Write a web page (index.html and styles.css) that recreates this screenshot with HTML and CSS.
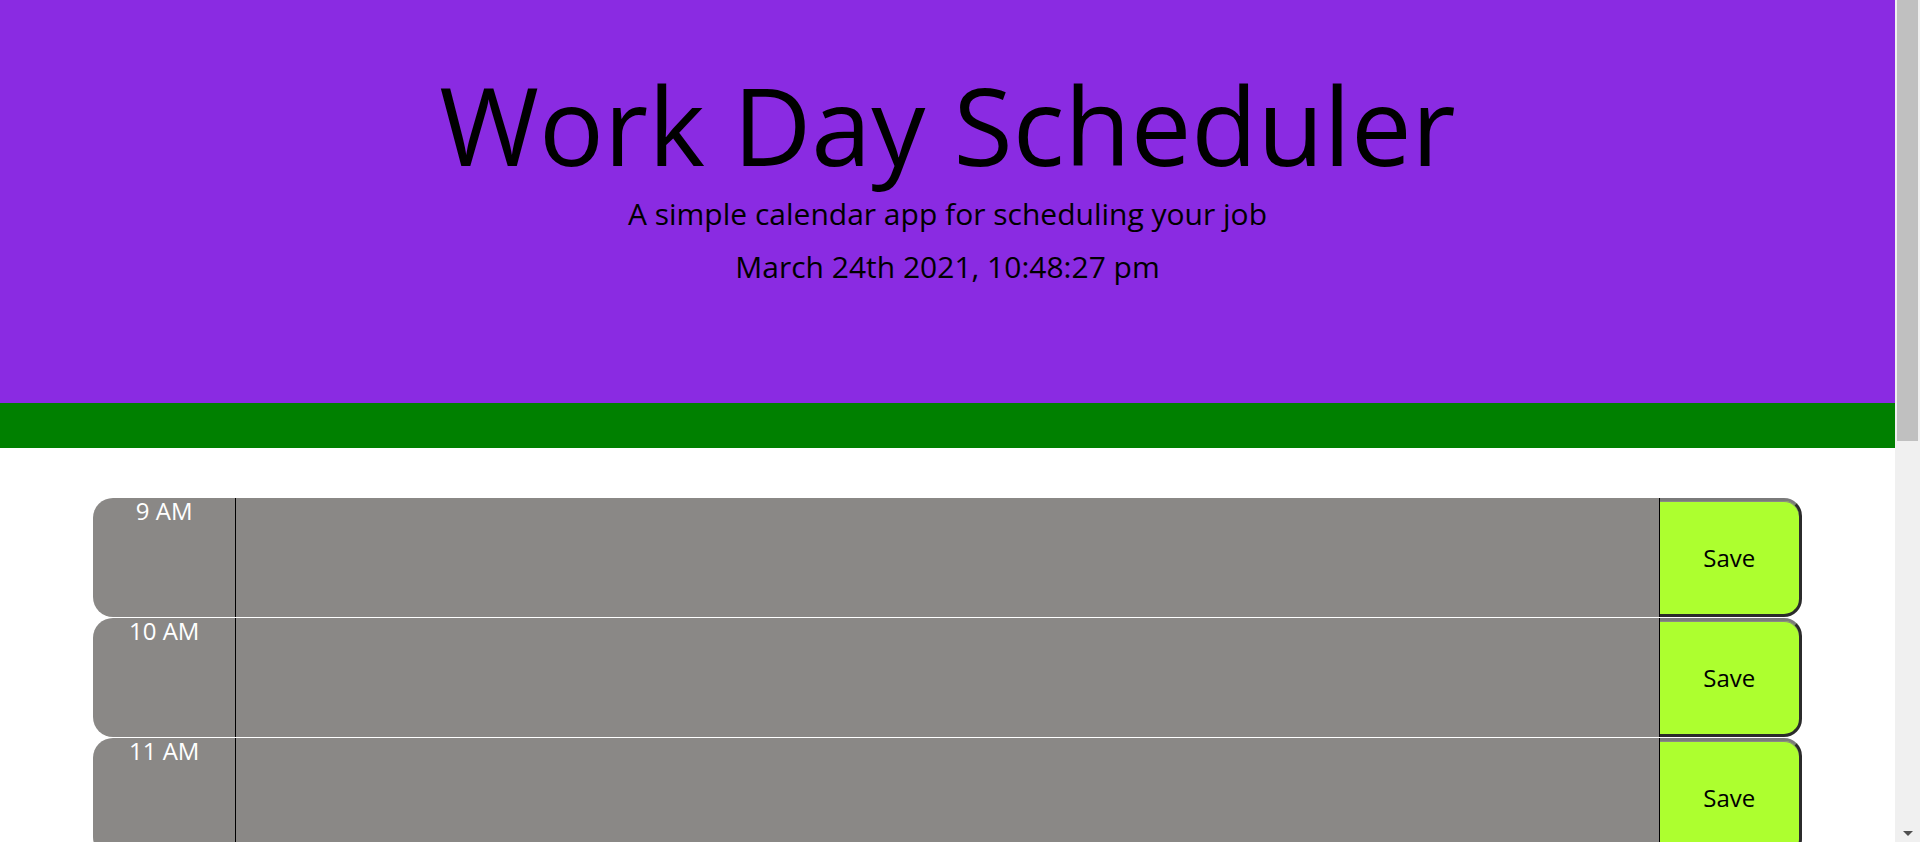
FILE: index.html
```html
<!DOCTYPE html>
<html lang="en">
<head>
<meta charset="utf-8">
<title>Work Day Scheduler</title>
<link rel="stylesheet" href="styles.css">
</head>
<body>
<div class="page">
  <header class="jumbotron">
    <h1 class="title">Work Day Scheduler</h1>
    <p class="lead">A simple calendar app for scheduling your job</p>
    <p class="current-day">March 24th 2021, 10:48:27 pm</p>
  </header>
  <div class="green-bar"></div>
  <main class="container">
    <div class="time-block"><div class="hour">9 AM</div><textarea class="description"></textarea><button class="save-btn">Save</button></div>
    <div class="time-block"><div class="hour">10 AM</div><textarea class="description"></textarea><button class="save-btn">Save</button></div>
    <div class="time-block"><div class="hour">11 AM</div><textarea class="description"></textarea><button class="save-btn">Save</button></div>
    <div class="time-block"><div class="hour">12 PM</div><textarea class="description"></textarea><button class="save-btn">Save</button></div>
    <div class="time-block"><div class="hour">1 PM</div><textarea class="description"></textarea><button class="save-btn">Save</button></div>
    <div class="time-block"><div class="hour">2 PM</div><textarea class="description"></textarea><button class="save-btn">Save</button></div>
    <div class="time-block"><div class="hour">3 PM</div><textarea class="description"></textarea><button class="save-btn">Save</button></div>
    <div class="time-block"><div class="hour">4 PM</div><textarea class="description"></textarea><button class="save-btn">Save</button></div>
    <div class="time-block"><div class="hour">5 PM</div><textarea class="description"></textarea><button class="save-btn">Save</button></div>
  </main>
</div>
<div class="scrollbar" aria-hidden="true">
  <div class="scroll-thumb"></div>
  <div class="scroll-track"></div>
  <div class="scroll-arrow"></div>
</div>
</body>
</html>
```
FILE: styles.css
```css
html, body {
  margin: 0;
  padding: 0;
  height: 100%;
  overflow: hidden;
}
body {
  display: flex;
  font-family: "Open Sans", "Liberation Sans", sans-serif;
  color: #000;
  background: #fff;
}
.page {
  flex: 1;
  min-width: 0;
  height: 100%;
  overflow: hidden;
}
.scrollbar {
  width: 25px;
  flex: none;
  background: #f0f0f0;
  display: flex;
  flex-direction: column;
  align-items: center;
  padding: 0 2px 6px;
  box-sizing: border-box;
}
.scroll-thumb {
  width: 100%;
  height: 441px;
  background: #c0c0c0;
}
.scroll-track {
  flex: 1;
}
.scroll-arrow {
  width: 0;
  height: 0;
  border-left: 5px solid transparent;
  border-right: 5px solid transparent;
  border-top: 5px solid #505050;
}
.jumbotron {
  background-color: #8a2be2;
  height: 403px;
  box-sizing: border-box;
  padding-top: 51px;
  text-align: center;
}
.title {
  margin: 0;
  font-size: 108px;
  font-weight: 400;
  line-height: 147px;
}
.lead {
  margin: 0;
  font-size: 30px;
  line-height: 32px;
}
.current-day {
  margin: 17px 0 0;
  font-size: 30px;
  line-height: 40px;
}
.green-bar {
  background-color: #008000;
  height: 45px;
}
.container {
  width: calc(100% - 186px);
  margin: 49px auto 0;
  padding-bottom: 40px;
}
.time-block {
  display: grid;
  grid-template-columns: 1fr 10fr 1fr;
  height: 120px;
  box-sizing: border-box;
  border-top: 1px solid #fff;
}
.hour {
  background-color: #8a8886;
  color: #fff;
  font-size: 24px;
  line-height: 24px;
  padding-top: 1px;
  text-align: center;
  border-top-left-radius: 20px;
  border-bottom-left-radius: 20px;
}
.description {
  background-color: #8a8886;
  border: none;
  border-left: 1px solid #000;
  border-right: 1px solid #000;
  margin: 0;
  padding: 6px;
  resize: none;
  font-family: inherit;
  font-size: 20px;
}
.save-btn {
  background-color: #adff2f;
  color: #000;
  font-family: inherit;
  font-size: 24px;
  margin: 0;
  padding: 0;
  border-style: solid;
  border-width: 3px 3px 3px 0;
  border-color: #7a7a7a #2b2b2b #2b2b2b transparent;
  border-top-right-radius: 18px;
  border-bottom-right-radius: 18px;
  box-shadow: inset 0 1px 0 #8a8886;
}
```
